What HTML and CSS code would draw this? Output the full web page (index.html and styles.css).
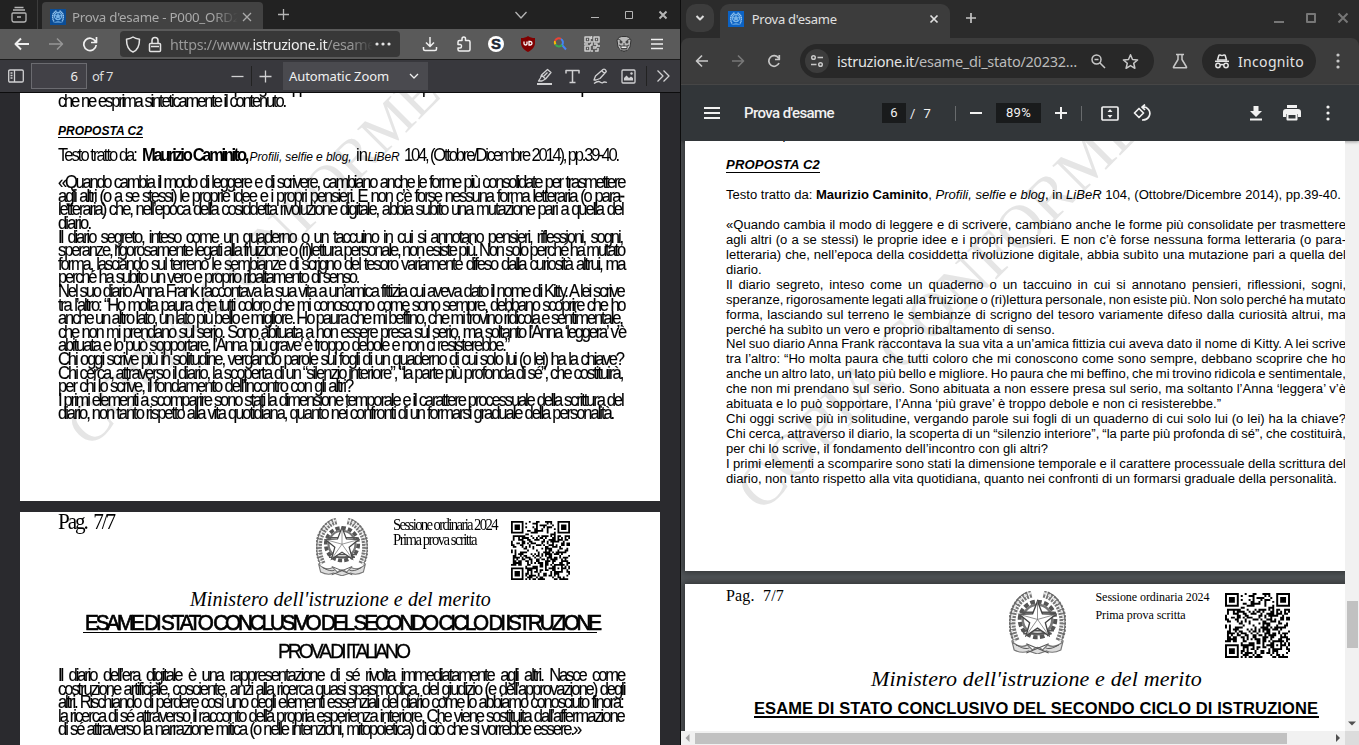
FILE: index.html
```html
<!DOCTYPE html>
<html lang="it">
<head>
<meta charset="utf-8">
<title>Prova d'esame</title>
<link rel="stylesheet" href="styles.css">
</head>
<body>
<svg class="defs" width="0" height="0">
  <symbol id="emblem" viewBox="0 0 56 62">
    <g fill="none" stroke="#555" stroke-width="2.6">
      <circle cx="28" cy="28" r="17.5" stroke-dasharray="4.5 2.3" stroke-width="4"/>
      <circle cx="28" cy="28" r="14.5" stroke-width="2.4" stroke="#777"/>
    </g>
    <g fill="none" stroke="#777">
      <path d="M22 3C6 7-3 28 7 49M34 3c16 4 25 25 15 46" stroke-width="7" stroke-dasharray="2.2 1.1"/>
      <path d="M22 2C5 7-4 29 6 50M34 2c17 5 26 27 16 48" stroke="#e4e4e4" stroke-width="2" stroke-dasharray="3 2"/>
      <path d="M18 1C2 8-3 30 4 48M38 1c16 7 21 29 14 47" stroke="#666" stroke-width="1"/>
      <path d="M3 50q8 7 15 3l5 5q5-5 10 0l5-5q7 4 15-3l-2 8q-8 4-14 1l-9 3-9-3q-6 3-14-1z" fill="#ddd" stroke-width="1.2"/>
      <path d="M7 53q8 5 13 3M49 53q-8 5-13 3M17 61l22-9M39 61l-22-9" stroke="#555"/>
    </g>
    <path d="M11 21h34M12 24h32M12 39h32M14 42h28" stroke="#555" stroke-width="1.6"/>
    <path d="M28 10l4.8 12.4 13.2.5-10.300 8.300 3.600 12.800L28 36.500 16.700 44l3.600-12.800L10 22.900l13.200-.5z" fill="#fff" stroke="#444" stroke-width="1.3"/>
    <path d="M28 10v18l11.300 16M28 28l18-5M28 28l-18-5M28 28L16.700 44" stroke="#777" stroke-width=".8" fill="none"/>
  </symbol>
  <symbol id="favicon" viewBox="0 0 16 16">
    <circle cx="8" cy="7" r="3.600" fill="none" stroke="#78b4e8" stroke-width="1.2"/>
    <path d="M6.500 2C2 3.500 1.800 9 4.200 13M9.500 2c4.500 1.500 4.700 7 2.300 11" fill="none" stroke="#9cc9f0" stroke-width="1.500" stroke-dasharray="1.3 .5"/>
    <path d="M8 4l1 2.200 2.300.1-1.800 1.500.6 2.200L8 8.800 5.900 10l.6-2.200-1.800-1.500L7 6.200zM4 13.500q4-2 8 0" fill="#78b4e8" stroke="#78b4e8" stroke-width=".4"/>
  </symbol>
</svg>
<div class="desktop">

<section class="firefox">
  <div class="ff-tabs">
    <span class="ff-view"><svg width="18" height="18" viewBox="0 0 18 18"><path d="M4.500 1.500h9M3 4h12M3 7h12q1 0 1 1v6q0 2-2 2H4q-2 0-2-2V8q0-1 1-1zM7 11h4" class="ln13"/></svg></span>
    <div class="ff-tab"><svg class="fav" width="16" height="16"><use href="#favicon"/></svg><span class="ff-title"><span data-w="168">Prova d'esame - P000_ORD2</span></span><svg width="10" height="10" viewBox="0 0 10 10"><path d="M1 1l8 8M9 1l-8 8" class="ln13"/></svg></div>
    <span class="box40"><svg width="13" height="13" viewBox="0 0 13 13"><path d="M6.500 1v11M1 6.500h11" class="ln13"/></svg></span>
    <span class="box40 ff-list"><svg width="14" height="14" viewBox="0 0 14 14"><path d="M1.500 4l5.500 6 5.500-6" class="ln13"/></svg></span>
    <span class="box34 ff-min"><svg width="10" height="10" viewBox="0 0 10 10"><path d="M1 7.500h8" class="ln1"/></svg></span>
    <span class="box34"><svg width="10" height="10" viewBox="0 0 10 10"><path d="M1.500 1.500h7v7h-7z" class="ln1"/></svg></span>
    <span class="box34"><svg width="10" height="10" viewBox="0 0 10 10"><path d="M1.500 1.500l7 7M8.500 1.500l-7 7" class="ln2"/></svg></span>
  </div>
  <div class="ff-nav">
    <span class="box34 bright ff-back"><svg width="16" height="14" viewBox="0 0 16 14"><path d="M15 7H2M7 1.500L1.500 7 7 12.500" class="ln2"/></svg></span>
    <span class="box34 dim"><svg width="16" height="14" viewBox="0 0 16 14"><path d="M1 7h13M9 1.500L14.500 7 9 12.500" class="ln15"/></svg></span>
    <span class="box34 bright"><svg width="16" height="16" viewBox="0 0 16 16"><path d="M13.500 5.500A6.200 6.200 0 1 0 14.200 9M14.500 1v5.500H9" class="ln17"/></svg></span>
    <div class="ff-url">
      <svg width="16" height="17" viewBox="0 0 16 17"><path d="M8 1c2 1.500 4.500 2 6.500 2.200C14.500 9 13 14 8 16 3 14 1.500 9 1.500 3.200 3.500 3 6 2.500 8 1z" class="ln15"/></svg>
      <svg width="14" height="17" viewBox="0 0 14 17"><path d="M2.500 7.500h9q1 0 1 1v6q0 1-1 1h-9q-1 0-1-1v-6q0-1 1-1zM4 7.500V4.500a3 3 0 0 1 6 0v3M3 10.500h8" class="ln15"/></svg>
      <span class="ff-addr"><span data-w="205">https://www.<b>istruzione.it</b>/esame</span></span>
      <svg width="16" height="4" viewBox="0 0 16 4"><path d="M2 2h.01M8 2h.01M14 2h.01" class="dots"/></svg>
    </div>
    <span class="box35 bright"><svg width="16" height="16" viewBox="0 0 16 16"><path d="M8 1v9M4 6.500L8 10.500l4-4M1.500 11v2q0 1.500 1.500 1.500h10q1.500 0 1.500-1.500v-2" class="ln15"/></svg></span>
    <span class="box33 bright"><svg width="16" height="16" viewBox="0 0 16 16"><path d="M2 6q0-1.500 1.500-1.500H6V3q0-2 1.800-2T9.500 3v1.500h3q1.500 0 1.500 1.500v7.500q0 1.500-1.500 1.500h-9Q2 15 2 13.500V12h2q1.500 0 1.500-1.800T4 8.500H2z" class="ln15"/></svg></span>
    <span class="box32"><span class="ext-s">S</span></span>
    <span class="box32"><svg width="16" height="16" viewBox="0 0 16 16"><path d="M8 0c2 1.500 4 2 7 2v5c0 4-3 7-7 9-4-2-7-5-7-9V2c3 0 5-.5 7-2z" fill="#800000"/><path d="M4 5.500v2q0 1.500 1.500 1.500T7 7.500v-2M9 5.500V9h1.300q1.700 0 1.700-1.700t-1.700-1.800z" stroke="#fff" fill="none" stroke-width="1.300"/></svg></span>
    <span class="box32"><svg width="14" height="14" viewBox="0 0 14 14" fill="none" stroke-width="2"><path d="M2.500 7.500A4 4 0 0 1 2 4" stroke="#f9bb05"/><path d="M2 4a4 4 0 0 1 6-2" stroke="#ea4335"/><path d="M8 2a4 4 0 0 1 1 6l4 4.500" stroke="#4285f4"/><path d="M9 8a4 4 0 0 1-6.500-.5" stroke="#34a853"/></svg></span>
    <span class="box32 qr-icon"><svg width="16" height="16" viewBox="0 0 16 16"><path d="M1 1h5v5H1zM10 1h5v5h-5zM1 10h5v5H1zM3 3.500h1M12 3.500h1M3 12.500h1M7.500 0v3M8 5v4H6M0 8h4M10 8h3v2h3M9 12h3v-2M14 12v3h-3M8 14v2M10 10v1" class="ln15"/></svg></span>
    <span class="box32"><svg width="16" height="16" viewBox="0 0 16 16"><path d="M1 4q2-4 7-3.500Q13 0 15 4l-1 7q-2 4.500-6 4.500T2 11z" fill="#b9b9b9" stroke="#333"/><circle cx="5" cy="6" r="1.500" fill="#444"/><circle cx="11" cy="6" r="1.500" fill="#444"/><path d="M2 3l3 1.500M14 3l-3 1.500M5 10h6v2.500H5zM8 7v3M3 9l2 1M13 9l-2 1M5 14h6" stroke="#333" fill="#eee" stroke-width=".9"/></svg></span>
    <span class="box33 bright"><svg width="14" height="14" viewBox="0 0 14 14"><path d="M1 2.500h12M1 7h12M1 11.500h12" class="ln15"/></svg></span>
  </div>
  <div class="ff-pdfbar">
    <span class="ff-side"><svg width="16" height="14" viewBox="0 0 16 14"><path d="M2 1h12q1.300 0 1.300 1.300v9.400q0 1.300-1.300 1.300H2Q.7 13 .7 11.700V2.300Q.7 1 2 1zM6.500 1v12M2.500 4h2M2.500 6.500h2M2.500 9h2" class="ln13"/></svg></span>
    <span class="ff-page">6</span><span class="ff-of"><span data-w="21">of 7</span></span>
    <span class="box28 ff-minus"><svg width="13" height="13" viewBox="0 0 13 13"><path d="M.5 6.500h12" class="ln13"/></svg></span><i class="vbar"></i>
    <span class="box28 ff-plus"><svg width="13" height="13" viewBox="0 0 13 13"><path d="M6.500.5v12M.5 6.500h12" class="ln13"/></svg></span>
    <span class="ff-zoom"><span data-w="100">Automatic Zoom</span><svg width="10" height="8" viewBox="0 0 10 8"><path d="M1 2l4 4 4-4" class="ln13"/></svg></span>
    <span class="box28 ff-tools"><svg width="17" height="17" viewBox="0 0 17 17"><path d="M2.500 13l2-3 1-3L11.500 1.500l3.500 3L9.500 11 6 13zM5.500 7l4 4" class="ln13"/><path d="M7.500 8.500l4-4" class="ln13"/><path d="M1 16h15" class="ln2"/></svg></span>
    <span class="box28"><svg width="15" height="15" viewBox="0 0 15 15"><path d="M1 4.500V1.500h13v3M7.500 1.500v12M4.500 13.500h6" class="ln15"/></svg></span>
    <span class="box28"><svg width="17" height="17" viewBox="0 0 17 17"><path d="M2 12l1.500-4L11 1.500q1-.8 2 0t1.300 2L8 10.500 4 12zM10 3l3 3M2 15.500q4-3 6-1.500t3 .5 4 0" class="ln13"/></svg></span>
    <span class="box28"><svg width="15" height="15" viewBox="0 0 15 15"><path d="M2 1h11q1 0 1 1v11q0 1-1 1H2q-1 0-1-1V2q0-1 1-1z" class="ln13"/><path d="M3 11.500V9l2.500-2.500L8 9l2-1.500 2 1.500v2.500z" fill="currentColor"/><circle cx="10.500" cy="4.500" r="1.200" fill="currentColor"/></svg></span>
    <i class="vbar ff-last"></i>
    <span class="box28"><svg width="14" height="14" viewBox="0 0 14 14"><path d="M1.500 1.500L7 7l-5.500 5.500M7.500 1.500L13 7l-5.500 5.500" class="ln13"/></svg></span>
  </div>
  <div class="ff-view-area">
    <article class="lpage lpage-six">
      <span class="mark mark-l">COPIA CONFORME</span>
      <div class="lines first">
        <div data-w="566">Puoi articolare il tuo elaborato in paragrafi opportunamente titolati e presentarlo con un titolo complessivo</div>
        <div data-w="227">che ne esprima sinteticamente il contenuto.</div>
      </div>
      <div class="proposta lprop"><span data-w="85">PROPOSTA C2</span></div>
      <div class="source">
        <span><span class="sq" data-w="78">Testo tratto da:</span></span><span><b class="sq" data-w="105">Maurizio Caminito,</b></span><em data-w="102">Profili, selfie e blog,</em><span><span class="sq" data-w="11">in</span></span><em data-w="32">LiBeR</em><span><span class="sq" data-w="214">104, (Ottobre/Dicembre 2014), pp.39-40.</span></span>
      </div>
      <div class="lines body">
        <div data-w="566">«Quando cambia il modo di leggere e di scrivere, cambiano anche le forme più consolidate per trasmettere</div>
        <div data-w="565">agli altri (o a se stessi) le proprie idee e i propri pensieri. E non c’è forse nessuna forma letteraria (o para-</div>
        <div data-w="565">letteraria) che, nell’epoca della cosiddetta rivoluzione digitale, abbia subito una mutazione pari a quella del</div>
        <div data-w="32">diario.</div>
        <div data-w="564">Il diario segreto, inteso come un quaderno o un taccuino in cui si annotano pensieri, riflessioni, sogni,</div>
        <div data-w="566">speranze, rigorosamente legati alla fruizione o (ri)lettura personale, non esiste più. Non solo perché ha mutato</div>
        <div data-w="566">forma, lasciando sul terreno le sembianze di scrigno del tesoro variamente difeso dalla curiosità altrui, ma</div>
        <div data-w="300">perché ha subito un vero e proprio ribaltamento di senso.</div>
        <div data-w="566">Nel suo diario Anna Frank raccontava la sua vita a un’amica fittizia cui aveva dato il nome di Kitty. A lei scrive</div>
        <div data-w="566">tra l’altro: “Ho molta paura che tutti coloro che mi conoscono come sono sempre, debbano scoprire che ho</div>
        <div data-w="564">anche un altro lato, un lato più bello e migliore. Ho paura che mi beffino, che mi trovino ridicola e sentimentale,</div>
        <div data-w="567">che non mi prendano sul serio. Sono abituata a non essere presa sul serio, ma soltanto l’Anna ‘leggera’ v’è</div>
        <div data-w="450">abituata e lo può sopportare, l’Anna ‘più grave’ è troppo debole e non ci resisterebbe.”</div>
        <div data-w="565">Chi oggi scrive più in solitudine, vergando parole sui fogli di un quaderno di cui solo lui (o lei) ha la chiave?</div>
        <div data-w="564">Chi cerca, attraverso il diario, la scoperta di un “silenzio interiore”, “la parte più profonda di sé”, che costituirà,</div>
        <div data-w="294">per chi lo scrive, il fondamento dell’incontro con gli altri?</div>
        <div data-w="564">I primi elementi a scomparire sono stati la dimensione temporale e il carattere processuale della scrittura del</div>
        <div data-w="555">diario, non tanto rispetto alla vita quotidiana, quanto nei confronti di un formarsi graduale della personalità.</div>
      </div>
    </article>
    <article class="lpage lpage-seven">
      <header class="lhead">
        <div class="pag"><span class="sq" data-w="56">Pag. &nbsp;7/7</span></div>
        <svg class="lemblem" width="52" height="58"><use href="#emblem"/></svg>
        <div class="session"><div><span class="sq" data-w="104">Sessione ordinaria 2024</span></div><div><span class="sq" data-w="83">Prima prova scritta</span></div></div>
        <svg class="qr" width="59" height="59" viewBox="0 0 33 33"></svg>
      </header>
      <div class="script lscript"><span data-w="301">Ministero dell'istruzione e del merito</span></div>
      <div class="ltitle"><span class="sq" data-w="514">ESAME DI STATO CONCLUSIVO DEL SECONDO CICLO DI ISTRUZIONE</span></div>
      <div class="lsub"><span class="sq" data-w="130">PROVA DI ITALIANO</span></div>
      <div class="lines tail">
        <div data-w="566">Il diario dell’era digitale è una rappresentazione di sé rivolta immediatamente agli altri. Nasce come</div>
        <div data-w="566">costruzione artificiale, cosciente, anzi alla ricerca quasi spasmodica, del giudizio (e dell’approvazione) degli</div>
        <div data-w="564">altri. Rischiando di perdere così uno degli elementi essenziali del diario come lo abbiamo conosciuto finora:</div>
        <div data-w="566">la ricerca di sé attraverso il racconto della propria esperienza interiore. Che viene sostituita dall’affermazione</div>
        <div data-w="522">di sé attraverso la narrazione mitica (o nelle intenzioni, mitopoietica) di ciò che si vorrebbe essere.»</div>
      </div>
    </article>
  </div>
</section>

<section class="chrome">
  <div class="cr-tabs">
    <span class="cr-search"><svg width="12" height="12" viewBox="0 0 12 12"><path d="M2.500 4L6 7.500 9.500 4" class="ln2"/></svg></span>
    <div class="cr-tab"><svg class="fav" width="16" height="16"><use href="#favicon"/></svg><span class="cr-title"><span data-w="85">Prova d'esame</span></span><svg width="10" height="10" viewBox="0 0 10 10"><path d="M1.500 1.500l7 7M8.500 1.500l-7 7" class="ln17"/></svg></div>
    <span class="box40 soft"><svg width="12" height="12" viewBox="0 0 12 12"><path d="M6 1v10M1 6h10" class="ln17"/></svg></span>
    <span class="box32 cr-min"><svg width="12" height="12" viewBox="0 0 12 12"><path d="M1 10h10" class="ln2"/></svg></span>
    <span class="box32"><svg width="12" height="12" viewBox="0 0 12 12"><path d="M2 2h8v8H2z" class="ln2"/></svg></span>
    <span class="box32"><svg width="12" height="12" viewBox="0 0 12 12"><path d="M1.500 1.500l9 9M10.500 1.500l-9 9" class="ln2"/></svg></span>
  </div>
  <div class="cr-nav">
    <span class="box36"><svg width="14" height="14" viewBox="0 0 14 14"><path d="M13 7H2M7 1.500L1.500 7 7 12.500" class="ln17"/></svg></span>
    <span class="box36 cdim"><svg width="14" height="14" viewBox="0 0 14 14"><path d="M1 7h11M7 1.500L12.500 7 7 12.500" class="ln17"/></svg></span>
    <span class="box36"><svg width="14" height="14" viewBox="0 0 14 14"><path d="M12 9A5.300 5.300 0 1 1 11.500 4M12.300 1v4.500H8" class="ln17"/></svg></span>
    <div class="omni"><span class="tune"><svg width="14" height="14" viewBox="0 0 14 14"><path d="M7.500 3.500H13M1 10.500h5.500" class="ln17"/><circle cx="3.500" cy="3.500" r="1.800" class="ln15"/><circle cx="10.500" cy="10.500" r="1.800" class="ln15"/></svg></span>
      <span class="addr"><span data-w="240"><b>istruzione.it</b>/esame_di_stato/20232…</span></span>
      <svg width="16" height="16" viewBox="0 0 16 16"><path d="M11 6.500a4.500 4.500 0 1 1-9 0 4.500 4.500 0 0 1 9 0zM10 10l5 5M4.500 6.500h4" class="ln15"/></svg>
      <svg class="star" width="17" height="17" viewBox="0 0 17 17"><path d="M8.500 1.800l2 4.700 5.100.4-3.900 3.400 1.200 5-4.400-2.700-4.400 2.700 1.200-5L1.400 6.900l5.100-.4z" class="ln15"/></svg></div>
    <span class="flask"><svg width="16" height="16" viewBox="0 0 16 16"><path d="M4 1.500h8M6 1.500v5L1.500 14q-.3.800.5.800h12q.8 0 .5-.8L10 6.500v-5" class="ln15"/></svg></span>
    <div class="incog"><svg width="16" height="15" viewBox="0 0 16 15"><path d="M1 7.300h14" class="ln15"/><path d="M3.500 6l1.300-4.500Q5 .8 6 1l2 .6L10 1q1-.2 1.200.5L12.500 6z" class="ln15"/><circle cx="4" cy="11.500" r="2.200" class="ln15"/><circle cx="12" cy="11.500" r="2.200" class="ln15"/><path d="M6 11q2-1 4 0" class="ln15"/></svg><span data-w="66">Incognito</span></div>
    <span class="kebab"><svg width="4" height="16" viewBox="0 0 4 16"><path d="M2 2h.01M2 8h.01M2 14h.01" class="dots"/></svg></span>
  </div>
  <div class="cr-pdfbar">
    <span class="burger"><svg width="16" height="12" viewBox="0 0 16 12"><path d="M0 1h16M0 6h16M0 11h16" class="ln2"/></svg></span>
    <span class="ptitle"><span data-w="90">Prova d'esame</span></span>
    <span class="pbox">6</span><span class="pof">/<span>7</span></span>
    <i class="cbar"></i>
    <span class="box40"><svg width="12" height="12" viewBox="0 0 12 12"><path d="M0 6h12" class="ln2"/></svg></span>
    <span class="pbox pct"><span data-w="25">89%</span></span>
    <span class="box40"><svg width="12" height="12" viewBox="0 0 12 12"><path d="M6 0v12M0 6h12" class="ln2"/></svg></span><i class="cbar"></i>
    <span class="fit"><svg width="18" height="15" viewBox="0 0 18 15"><path d="M2 1h14q1 0 1 1v11q0 1-1 1H2q-1 0-1-1V2q0-1 1-1z" class="ln17"/><path d="M6.500 6L9 3l2.500 3zM6.500 9L9 12l2.500-3z" fill="currentColor"/></svg></span>
    <span class="box32"><svg width="18" height="18" viewBox="0 0 18 18"><path d="M1.500 9L6 4.500 10.500 9 6 13.500zM9 3q4-.8 6.500 2.500t.5 7-7 3.500M12 .5L9 3.200 12 6" class="ln17"/></svg></span>
    <span class="box36 dl"><svg width="14" height="15" viewBox="0 0 14 15"><path d="M4.500 0h5v5H13L7 11 1 5h3.500zM1 12.500h12v2H1z" fill="currentColor"/></svg></span>
    <span class="box36"><svg width="18" height="16" viewBox="0 0 18 16"><path d="M4 0h10v3H4zM3 4h12q3 0 3 3v5h-3V9H3v3H0V7q0-3 3-3z" fill="currentColor"/><path d="M4.500 9h9v5.500h-9z" class="ln2"/></svg></span>
    <span class="box36"><svg width="4" height="16" viewBox="0 0 4 16"><path d="M2 2h.01M2 8h.01M2 14h.01" class="dots"/></svg></span>
  </div>
  <div class="cr-body">
    <div class="cr-view">
      <article class="rpage rsix">
        <span class="mark mark-r">COPIA CONFORME</span>
        <div class="rl rprev">che ne esprima sinteticamente il contenuto.</div>
        <div class="proposta rprop"><span data-w="94">PROPOSTA C2</span></div>
        <div class="rl rsource"><span data-w="615">Testo tratto da: <b>Maurizio Caminito</b>, <em>Profili, selfie e blog</em>, in <em>LiBeR</em> 104, (Ottobre/Dicembre 2014), pp.39-40.</span></div>
        <div class="rl rbody">
          <div data-w="620">«Quando cambia il modo di leggere e di scrivere, cambiano anche le forme più consolidate per trasmettere</div>
          <div data-w="620">agli altri (o a se stessi) le proprie idee e i propri pensieri. E non c’è forse nessuna forma letteraria (o para-</div>
          <div data-w="620">letteraria) che, nell’epoca della cosiddetta rivoluzione digitale, abbia subìto una mutazione pari a quella del</div>
          <div>diario.</div>
          <div data-w="620">Il diario segreto, inteso come un quaderno o un taccuino in cui si annotano pensieri, riflessioni, sogni,</div>
          <div data-w="620">speranze, rigorosamente legati alla fruizione o (ri)lettura personale, non esiste più. Non solo perché ha mutato</div>
          <div data-w="620">forma, lasciando sul terreno le sembianze di scrigno del tesoro variamente difeso dalla curiosità altrui, ma</div>
          <div data-w="329">perché ha subìto un vero e proprio ribaltamento di senso.</div>
          <div data-w="620">Nel suo diario Anna Frank raccontava la sua vita a un’amica fittizia cui aveva dato il nome di Kitty. A lei scrive</div>
          <div data-w="620">tra l’altro: “Ho molta paura che tutti coloro che mi conoscono come sono sempre, debbano scoprire che ho</div>
          <div data-w="620">anche un altro lato, un lato più bello e migliore. Ho paura che mi beffino, che mi trovino ridicola e sentimentale,</div>
          <div data-w="620">che non mi prendano sul serio. Sono abituata a non essere presa sul serio, ma soltanto l’Anna ‘leggera’ v’è</div>
          <div data-w="495">abituata e lo può sopportare, l’Anna ‘più grave’ è troppo debole e non ci resisterebbe.”</div>
          <div data-w="620">Chi oggi scrive più in solitudine, vergando parole sui fogli di un quaderno di cui solo lui (o lei) ha la chiave?</div>
          <div data-w="620">Chi cerca, attraverso il diario, la scoperta di un “silenzio interiore”, “la parte più profonda di sé”, che costituirà,</div>
          <div data-w="322">per chi lo scrive, il fondamento dell’incontro con gli altri?</div>
          <div data-w="620">I primi elementi a scomparire sono stati la dimensione temporale e il carattere processuale della scrittura del</div>
          <div data-w="611">diario, non tanto rispetto alla vita quotidiana, quanto nei confronti di un formarsi graduale della personalità.</div>
        </div>
      </article>
      <article class="rpage rseven">
        <header class="rhead">
          <div class="pag"><span data-w="58">Pag. &nbsp;7/7</span></div>
          <svg class="remblem" width="57" height="63"><use href="#emblem"/></svg>
          <div class="session"><div><span data-w="114">Sessione ordinaria 2024</span></div><div><span data-w="90">Prima prova scritta</span></div></div>
          <svg class="qr" width="65" height="65" viewBox="0 0 33 33"></svg>
        </header>
        <div class="script rscript"><span data-w="331">Ministero dell'istruzione e del merito</span></div>
        <div class="rtitle"><span data-w="564">ESAME DI STATO CONCLUSIVO DEL SECONDO CICLO DI ISTRUZIONE</span></div>
      </article>
    </div>
    <div class="vscroll"><i class="vthumb"></i><svg width="14" height="14" viewBox="0 0 14 14"><path d="M3 4.500h8L7 8.500z" fill="#505050"/></svg></div>
    <div class="hscroll"><svg width="14" height="14" viewBox="0 0 14 14"><path d="M8.500 3v8l-4-4z" fill="#a3a3a3"/></svg><i class="hthumb"></i><svg width="14" height="14" viewBox="0 0 14 14"><path d="M5 3v8l4-4z" fill="#505050"/></svg></div>
    <i class="corner"></i>
  </div>
</section>
</div>
<script src="script.js"></script>
</body>
</html>
```
FILE: styles.css
```css
* { box-sizing: border-box; }
body { margin: 0; overflow: hidden; font-family: "Liberation Sans", sans-serif; }
svg { flex: none; display: block; }
.defs { position: absolute; }
.desktop { display: flex; width: 1359px; height: 745px; background: #0c0c0c; }
[data-w] { display: inline-block; white-space: nowrap; }

.ln1, .ln13, .ln15, .ln17, .ln2 { fill: none; stroke: currentColor; stroke-linejoin: round; }
.ln1 { stroke-width: 1; }
.ln13 { stroke-width: 1.3; }
.ln15 { stroke-width: 1.5; }
.ln17 { stroke-width: 1.7; }
.ln2 { stroke-width: 2; }
.dots { stroke: currentColor; stroke-width: 3.2; stroke-linecap: round; }
.box28, .box32, .box33, .box34, .box35, .box36, .box40 { flex: none; display: flex; align-items: center; justify-content: center; }
.box28 { width: 28px; }
.box32 { width: 32px; }
.box33 { width: 33px; }
.box34 { width: 34px; }
.box35 { width: 35px; }
.box36 { width: 36px; }
.box40 { width: 40px; }

/* Firefox window */
.firefox { width: 681px; height: 745px; display: flex; flex-direction: column; border-right: 1px solid #0c0c0c; overflow: hidden; color: #b5b5b5; font-family: "Noto Sans", sans-serif; }
.ff-tabs { flex: none; height: 29px; display: flex; align-items: stretch; background: #222; }
.ff-view { width: 38px; margin-right: 4px; display: flex; align-items: center; justify-content: center; border-right: 1px solid #3c3c3c; }
.ff-tab { width: 221px; margin-top: 2px; border-radius: 4px 4px 0 0; background: #424242; display: flex; align-items: center; padding: 2px 11px 0 8px; color: #aaa; }
.fav { background: #0b4d96; }
.ff-title { width: 171px; margin-left: 6px; font-size: 13.3px; overflow: hidden; -webkit-mask-image: linear-gradient(90deg, #000 82%, transparent 97%); mask-image: linear-gradient(90deg, #000 82%, transparent 97%); }
.ff-tab > svg:last-child { margin-left: -1px; }
.ff-list { margin-left: 198px; }
.ff-min { margin-left: 37px; }
.ff-nav { flex: none; height: 31px; display: flex; align-items: center; background: #5a5a5a; border-bottom: 1px solid #1c1c1c; }
.ff-back { margin-left: 5px; }
.bright { color: #f0f0f0; }
.qr-icon { color: #cfcfcf; }
.dim { color: #969696; }
.ff-url { width: 280px; height: 26px; margin: 0 12px 0 13px; padding: 0 5px; background: #383838; border-radius: 4px; color: #e4e4e4; display: flex; align-items: center; }
.ff-url svg + svg { margin-left: 7px; }
.ff-addr { width: 205px; margin-left: 8px; color: #999; font-size: 14.3px; overflow: hidden; -webkit-mask-image: linear-gradient(90deg, #000 88%, transparent 99%); mask-image: linear-gradient(90deg, #000 88%, transparent 99%); }
.ff-addr b { font-weight: 400; color: #eee; }
.ext-s { width: 16px; height: 16px; border-radius: 50%; background: #fff; color: #1d2733; font: bold 15px/16px "Liberation Sans", sans-serif; text-align: center; -webkit-text-stroke: .5px #1d2733; }
.ff-pdfbar { flex: none; height: 33px; display: flex; align-items: center; background: #38383d; border-bottom: 1px solid #0c0c0d; color: #d0d0d2; font-size: 13px; }
.ff-side { width: 31px; display: flex; justify-content: center; }
.ff-page { width: 56px; height: 26px; border: 1px solid #6b6b70; background: #424147; color: #eee; line-height: 24px; text-align: right; padding-right: 8px; }
.ff-of { width: 21px; margin-left: 5px; color: #ddd; }
.ff-minus { margin-left: 110px; }
.ff-plus { margin-left: -1px; }
.vbar { width: 1px; height: 20px; background: #222; }
.ff-zoom { width: 145px; height: 28px; margin-left: 4px; background: #4a4a4f; padding: 0 9px 0 6px; display: flex; align-items: center; justify-content: space-between; color: #f0f0f0; }
.ff-tools { margin-left: 102px; }
.ff-last { margin: 0 2px 0 4px; }
.ff-view-area { flex: 1; background: #2a2a2e; padding-left: 20px; overflow: hidden; }

/* Pages drawn with cramped glyph advances */
.lpage { width: 640px; background: #fff; color: #000; padding-left: 38px; overflow: hidden; position: relative; font-family: "Liberation Sans", sans-serif; }
.lpage-six { height: 408px; }
.lpage-seven { height: 233px; margin-top: 11px; }
.lines { position: relative; font-size: 18px; line-height: 13.59px; }
.lines > div { display: block; transform: scaleX(.92); transform-origin: 0 0; -webkit-text-stroke: .15px #000; }
.sq { transform: scaleX(.92); transform-origin: 0 0; white-space: nowrap; }
.first { margin-top: -11.6px; }
.proposta { position: relative; font-weight: bold; font-style: italic; }
.proposta span { border-bottom: 1px solid #000; }
.lprop { margin-top: 15.4px; height: 14px; font-size: 12px; line-height: 12px; padding-top: 1px; }
.source { position: relative; display: grid; grid-template-columns: 83.5px 108px 106.5px 11.5px 36px 214px; margin-top: 11.3px; height: 13.59px; line-height: 13.59px; font-size: 18px; white-space: nowrap; }
.source > span { width: 0; }
.source em { font-size: 12px; line-height: 17.900px; }
.source b { font-weight: bold; }
.body { margin-top: 13.4px; }
.mark { position: absolute; font-family: "Liberation Serif", serif; color: #e5e5e5; white-space: nowrap; line-height: 1; transform-origin: 0 0; transform: rotate(-45deg); }
.mark-l { font-size: 57px; left: 36px; top: 322px; }
.mark-r { font-size: 62px; left: 40px; top: 336px; }
.lhead { display: flex; height: 74px; font-family: "Liberation Serif", serif; }
.lhead .pag { width: 258px; font-size: 23px; line-height: 20px; }
.lemblem { margin-top: 6px; }
.lhead .session { width: 117.500px; margin-left: 25px; padding-top: 5px; font-size: 16px; line-height: 15px; white-space: nowrap; }
.lhead .qr { margin-top: 9px; }
.script { font-family: "Liberation Serif", serif; font-style: italic; white-space: nowrap; }
.lscript { font-size: 20px; line-height: 27px; padding-left: 132px; height: 24px; }
.ltitle { margin-left: 25px; width: 514px; height: 23px; border-bottom: 1.5px solid #000; font-size: 22.5px; line-height: 25px; padding-left: 2px; -webkit-text-stroke: .7px #000; }
.lsub { margin-left: 220px; font-size: 21px; line-height: 24px; height: 24px; margin-top: 6px; width: 130px; -webkit-text-stroke: .3px #000; }
.tail { margin-top: 6px; line-height: 13.500px; }

/* Chromium window */
.chrome { width: 678px; height: 745px; display: flex; flex-direction: column; overflow: hidden; background: #2b2b2b; color: #777; font-family: "Noto Sans", sans-serif; }
.cr-tabs { flex: none; height: 38px; display: flex; padding-left: 5px; align-items: center; }
.cr-search { width: 28px; height: 28px; margin: 0 6px 2px 0; border-radius: 10px; background: #3c3c3c; color: #ddd; display: flex; align-items: center; justify-content: center; }
.cr-tab { width: 232px; height: 34px; margin-top: 4px; padding: 0 11px 5px 8px; border-radius: 9px 9px 0 0; background: #3c3c3c; display: flex; align-items: center; color: #e0e0e0; font-size: 13px; }
.cr-tab .fav { background: #0b62c4; }
.cr-title { margin-left: 8px; flex: 1; }
.soft { color: #c4c4c4; }
.cr-tabs .box40, .cr-tabs .box32 { margin-bottom: 2px; }
.cr-tabs .box40 { margin-left: 1px; }
.cr-tabs .cr-min { margin-left: 272px; }
.cr-nav { flex: none; height: 47px; display: flex; align-items: center; padding-left: 3px; background: #3c3c3c; border-bottom: 1px solid #4b4b4b; border-radius: 8px 8px 0 0; color: #c7c7c7; }
.cdim { color: #777; }
.omni { width: 354px; height: 34px; margin-left: 8px; padding: 0 15px 0 5px; border-radius: 17px; background: #282828; display: flex; align-items: center; }
.tune { width: 24px; height: 24px; border-radius: 50%; background: #3c3c3c; display: flex; align-items: center; justify-content: center; }
.addr { width: 253px; margin-left: 8px; font-size: 14.500px; color: #bbb; }
.addr b { font-weight: 400; color: #e4e4e4; }
.star { margin-left: 16px; }
.flask { margin-left: 18px; }
.incog { width: 114px; height: 34px; margin-left: 14px; padding-left: 12px; border-radius: 17px; background: #282828; color: #e3e3e3; display: flex; align-items: center; gap: 8px; font-size: 14px; }
.kebab { margin-left: 20px; }
.cr-pdfbar { flex: none; height: 56px; background: #323639; display: flex; align-items: center; color: #f1f1f1; position: relative; box-shadow: 0 1px 3px rgba(0,0,0,.35); font-family: Roboto, sans-serif; }
.burger { margin-left: 23px; }
.ptitle { width: 90px; margin-left: 24px; font-size: 15px; font-weight: 500; }
.pbox { width: 24px; height: 20px; margin-left: 48px; background: #191b1c; font-size: 13px; line-height: 20px; text-align: center; }
.pof { width: 45px; margin-left: 4px; font-size: 13px; display: flex; gap: 8px; }
.cbar { width: 1px; height: 15px; background: #686b6d; }
.cbar + .box40 { margin-right: 0; }
.pct { width: 45px; margin-left: 0; }
.fit { margin: 0 7px 0 19px; }
.dl { margin-left: 80px; }
.cr-body { flex: 1; display: grid; grid-template-columns: 664px 14px; grid-template-rows: 590px 14px; }
.cr-view { overflow: hidden; background: #525659; padding-left: 4px; }
.rpage { width: 726px; background: #fff; color: #000; padding-left: 41px; position: relative; overflow: hidden; font-family: "Liberation Sans", sans-serif; }
.cr-view .rpage { box-shadow: 0 0 7px 2px rgba(0,0,0,.4); }
.rsix { height: 430px; }
.rseven { height: 200px; margin-top: 13px; }
.rl { position: relative; font-size: 13.05px; line-height: 14.94px; white-space: nowrap; }
.rprev { margin-top: -13.4px; }
.rprop { margin-top: 15.5px; height: 17px; font-size: 13.05px; line-height: 14px; }
.rsource { margin-top: 12.5px; }
.rbody { margin-top: 15.5px; width: 621px; }
.rbody > div { display: block; }
.rhead { display: flex; height: 76px; font-family: "Liberation Serif", serif; }
.rhead .pag { width: 283px; font-size: 16px; line-height: 20px; padding-top: 2px; }
.remblem { margin-top: 7px; }
.rhead .session { width: 129px; margin-left: 29.500px; padding-top: 4px; font-size: 12px; line-height: 18px; white-space: nowrap; }
.rhead .qr { margin-top: 8.500px; }
.rscript { padding-left: 145px; height: 38px; font-size: 22px; line-height: 38px; }
.rtitle { margin-left: 28px; width: 565px; height: 20px; font-size: 16.5px; line-height: 20px; font-weight: bold; border-bottom: 2px solid #000; }
.vscroll { background: #f1f1f1; display: flex; flex-direction: column; justify-content: space-between; }
.vthumb { display: block; width: 11px; height: 47px; margin: 460px 1px 0 2px; background: #c1c1c1; }
.hscroll { background: #f1f1f1; display: flex; align-items: center; justify-content: space-between; }
.hthumb { width: 592px; height: 11px; margin-right: auto; background: #c1c1c1; }
.corner { background: #dcdcdc; }
```
FILE: script.js
```js
// Fits each measured run of text to its width in pixels.
const SQUEEZE = 0.92;
const ADVANCE_RATIO = 11.9 / 18;
const ctx = document.createElement('canvas').getContext('2d');

document.querySelectorAll('[data-w]').forEach(el => {
  const inLines = el.parentElement.classList.contains('lines');
  const inBody = el.parentElement.classList.contains('rbody');
  const squeezed = inLines || el.classList.contains('sq');
  const width = Number(el.dataset.w);
  const text = el.textContent;
  const target = squeezed ? width / SQUEEZE : width;
  const solid = text.replace(/ /g, '');
  const spaces = text.length - solid.length;
  el.style.width = 'max-content';
  const natural = el.getBoundingClientRect().width / (squeezed ? SQUEEZE : 1);
  if (inLines) {
    const cs = getComputedStyle(el);
    ctx.font = cs.fontSize + ' ' + cs.fontFamily;
    const ls = ctx.measureText(solid).width * (ADVANCE_RATIO / SQUEEZE - 1) / solid.length;
    el.style.letterSpacing = ls + 'px';
    const now = el.offsetWidth;
    if (spaces) el.style.wordSpacing = (target - now) / spaces + 'px';
    else el.style.letterSpacing = ls + (target - now) / text.length + 'px';
  } else if (inBody) {
    el.style.wordSpacing = (target - natural) / spaces + 'px';
  } else {
    el.style.letterSpacing = (target - natural) / text.length + 'px';
  }
});

// QR codes: 33 modules a side, finder squares in three corners.
const N = 33;
function square(x, y, cx, cy, r) {
  const d = Math.max(Math.abs(x - cx), Math.abs(y - cy));
  return d > r ? null : d;
}
let seed = 20240;
const rnd = () => (seed = (seed * 1103515245 + 12345) % 2147483648) / 2147483648;
let path = '';
for (let y = 0; y < N; y++) for (let x = 0; x < N; x++) {
  let on = rnd() > 0.49;
  for (const [cx, cy] of [[3, 3], [29, 3], [3, 29]]) {
    const d = square(x, y, cx, cy, 4);
    if (d !== null) on = d !== 4 && d !== 2;
  }
  const a = square(x, y, 26, 26, 2);
  if (a !== null) on = a !== 1;
  if (on) path += `M${x} ${y}h1v1h-1z`;
}
document.querySelectorAll('.qr').forEach(s => { s.innerHTML = `<path d="${path}"/>`; });
```
